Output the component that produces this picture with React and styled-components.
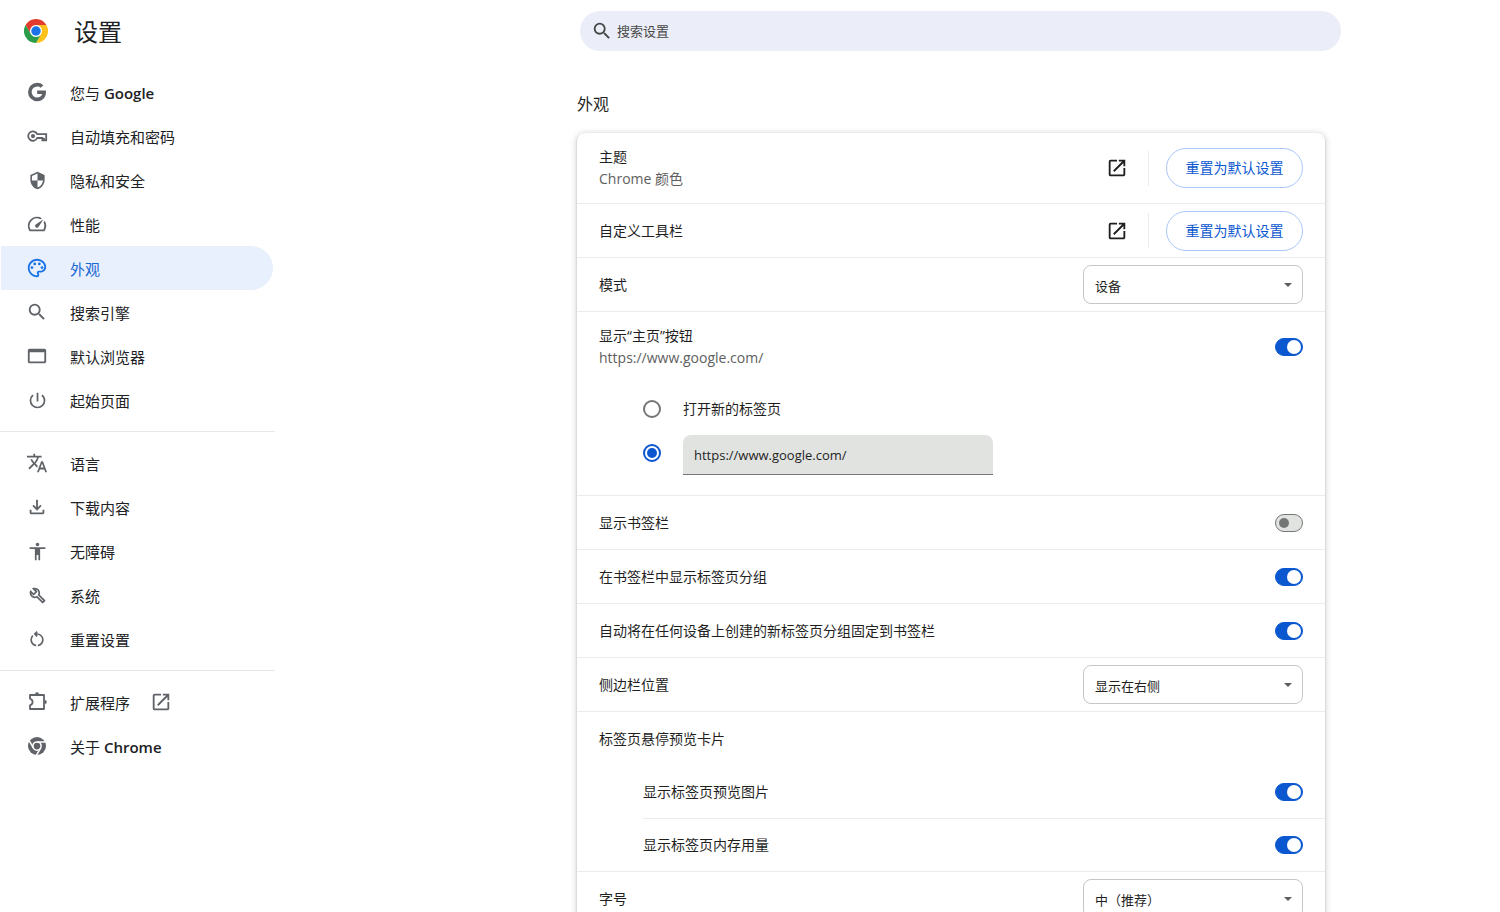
import React from 'react';
import styled, { createGlobalStyle } from 'styled-components';
import {
   MdSecurity,
   MdSpeed,
   MdOutlinePalette,
   MdSearch,
   MdPowerSettingsNew,
   MdTranslate,
   MdOutlineFileDownload,
   MdAccessibility,
   MdOutlineRestartAlt,
   MdOpenInNew,
} from 'react-icons/md';

const GlobalStyle = createGlobalStyle`
   * {
      box-sizing: border-box;
   }

   body {
      margin: 0;
      background: #fff;
      color: #1f1f1f;
      font-family: "Open Sans", "Noto Sans CJK SC", sans-serif;
      font-size: 14px;
      line-height: 22px;
   }

   button, input, select {
      font-family: inherit;
   }
`;

const Page = styled.div`
   height: 100vh;
   display: flex;
   flex-direction: column;
`;

const Header = styled.header`
   flex: none;
   height: 62px;
   display: flex;
   align-items: center;
`;

const Brand = styled.div`
   flex: none;
   width: 275px;
   padding-left: 24px;
   display: flex;
   align-items: center;
   gap: 26px;
`;

const Title = styled.h1`
   margin: 0;
   padding-top: 2px;
   font-size: 24px;
   font-weight: 400;
   line-height: 32px;
   color: #202124;
`;

const SearchArea = styled.div`
   flex: 1;
   display: grid;
   grid-template-columns: 305fr minmax(0, 761px) 159fr;
`;

const SearchBox = styled.label`
   grid-column: 2;
   height: 40px;
   padding: 0 12px 0 11px;
   display: flex;
   align-items: center;
   gap: 4px;
   border-radius: 20px;
   background: #ebeef8;
   color: #474747;
`;

const SearchInput = styled.input`
   flex: 1;
   min-width: 0;
   padding: 0;
   border: 0;
   outline: 0;
   background: transparent;
   font-size: 13px;
   color: #1f1f1f;

   &::placeholder {
      color: #474747;
      opacity: 1;
   }
`;

const Body = styled.div`
   flex: 1;
   min-height: 0;
   display: flex;
`;

const Sidebar = styled.nav`
   flex: none;
   width: 275px;
   padding-top: 8px;
   overflow-y: auto;
   scrollbar-width: none;
`;

const NavGroup = styled.ul`
   margin: 0;
   padding: 0 2px 0 1px;
   list-style: none;
`;

const NavDivider = styled.hr`
   height: 1px;
   margin: 9px 0;
   border: 0;
   background: #e8e8e8;
`;

const NavLink = styled.a`
   height: 44px;
   padding-left: 25px;
   display: flex;
   align-items: center;
   border-radius: 0 22px 22px 0;
   background: ${({ $active }) => ($active ? '#e8f0fe' : 'transparent')};
   color: ${({ $active }) => ($active ? '#1967d2' : '#202124')};
   font-size: 15px;
   text-decoration: none;
`;

const NavIcon = styled.span`
   flex: none;
   width: 22px;
   height: 22px;
   margin-right: 22px;
   display: flex;
   align-items: center;
   justify-content: center;
   color: ${({ $active }) => ($active ? '#1a73e8' : '#5f6368')};
`;

const NavText = styled.span`
   padding-top: 1px;
`;

const Latin = styled.span`
   font-weight: 600;
`;

const NavExternal = styled(MdOpenInNew)`
   margin-left: 20px;
   color: #5f6368;
`;

const Main = styled.main`
   flex: 1;
   min-width: 0;
   overflow-y: auto;
   scrollbar-width: none;
   display: grid;
   grid-template-columns: 302fr minmax(0, 748px) 175fr;
`;

const Section = styled.section`
   grid-column: 2;
   padding: 31px 0 40px;
`;

const SectionTitle = styled.h2`
   margin: 0 0 18px;
   font-size: 16px;
   font-weight: 400;
   line-height: 22px;
   color: #1f1f1f;
`;

const Card = styled.div`
   border-radius: 8px;
   background: #fff;
   box-shadow: 0 1px 2px rgba(60, 64, 67, 0.3), 0 1px 6px 1px rgba(60, 64, 67, 0.2);
`;

const Row = styled.div`
   min-height: ${({ $tall }) => ($tall ? 71 : 54)}px;
   padding: 0 22px;
   display: flex;
   align-items: center;
   justify-content: space-between;
   border-top: 1px solid #ebebeb;

   &:first-child {
      min-height: 70px;
      border-top: 0;
   }
`;

const Nested = styled.div`
   margin-left: 66px;
`;

const NestedRow = styled(Row)`
   min-height: 53px;
   padding-left: 0;

   &:first-child {
      min-height: 53px;
   }
`;

const Text = styled.div`
   display: flex;
   flex-direction: column;
`;

const SubLabel = styled.span`
   color: #5e5e5e;
`;

const Actions = styled.div`
   display: flex;
   align-items: center;
`;

const IconButton = styled.button`
   width: 36px;
   height: 36px;
   padding: 0;
   display: flex;
   align-items: center;
   justify-content: center;
   border: 0;
   border-radius: 50%;
   background: transparent;
   color: #1f1f1f;
`;

const Separator = styled.span`
   width: 1px;
   height: 35px;
   margin: 0 17px 0 13px;
   background: #ebebeb;
`;

const ResetButton = styled.button`
   min-width: 137px;
   height: 40px;
   padding: 0 16px;
   border: 1px solid #a8c7fa;
   border-radius: 20px;
   background: #fff;
   color: #0b57d0;
   font-size: 14px;
   line-height: 22px;
`;

const SelectBox = styled.div`
   flex: none;
   width: 220px;
   display: grid;
   align-items: center;

   & > * {
      grid-area: 1 / 1;
   }
`;

const SelectField = styled.select`
   width: 100%;
   height: 39px;
   padding: 2px 32px 0 11px;
   appearance: none;
   border: 1px solid #c4c7c5;
   border-radius: 8px;
   background: #fff;
   color: #1f1f1f;
   font-size: 13px;
`;

const SelectArrow = styled.svg`
   justify-self: end;
   margin-right: 11px;
   pointer-events: none;
`;

const Switch = styled.input.attrs({ type: 'checkbox', role: 'switch' })`
   flex: none;
   width: 28px;
   height: 18px;
   margin: 0;
   padding: 0 3px;
   display: flex;
   align-items: center;
   appearance: none;
   border: 1px solid #747775;
   border-radius: 9px;
   background: #e1e3e1;

   &::before {
      content: '';
      width: 10px;
      height: 10px;
      border-radius: 50%;
      background: #747775;
   }

   &:checked {
      padding: 0 1px;
      justify-content: flex-end;
      border-color: #0b57d0;
      background: #0b57d0;
   }

   &:checked::before {
      width: 14px;
      height: 14px;
      background: #fff;
   }
`;

const HomeOptions = styled.div`
   padding: 5px 22px 20px 66px;
`;

const HomeOption = styled.div`
   height: 44px;
   display: flex;
   align-items: center;
   gap: 22px;
`;

const Radio = styled.input.attrs({ type: 'radio' })`
   flex: none;
   width: 18px;
   height: 18px;
   margin: 0;
   display: grid;
   place-items: center;
   appearance: none;
   border: 2px solid #747775;
   border-radius: 50%;

   &:checked {
      border-color: #0b57d0;
   }

   &:checked::before {
      content: '';
      width: 10px;
      height: 10px;
      border-radius: 50%;
      background: #0b57d0;
   }
`;

const UrlInput = styled.input`
   width: 310px;
   height: 40px;
   padding: 0 11px;
   align-self: flex-end;
   border: 0;
   border-bottom: 1px solid #747775;
   border-radius: 8px 8px 0 0;
   outline: 0;
   background: #e1e3e1;
   color: #1f1f1f;
   font-size: 13px;
`;

const ChromeLogo = () =>
   <svg width="24" height="24" viewBox="0 0 48 48" aria-hidden="true">
      <circle cx="24" cy="24" r="12" fill="#fff" />
      <path fill="#e33b2e" d="M24 12H44.78a23.99 23.99 0 0 0-41.56 0L13.61 30A11.99 11.99 0 0 1 24 12Z" />
      <path fill="#fcc21b" d="M34.39 30 24 48A23.99 23.99 0 0 0 44.78 12H24A11.99 11.99 0 0 1 34.39 30Z" />
      <path fill="#2a9c4a" d="M13.61 30 3.22 12A23.99 23.99 0 0 0 24 48L34.39 30a11.99 11.99 0 0 1-20.78 0Z" />
      <circle cx="24" cy="24" r="9.5" fill="#1a73e8" />
   </svg>

const ChromeIcon = () =>
   <svg width="18" height="18" viewBox="0 0 48 48" aria-hidden="true">
      <circle cx="24" cy="24" r="24" fill="currentColor" />
      <g fill="none" stroke="#fff" strokeWidth="4">
         <circle cx="24" cy="24" r="11" />
         <path d="M24 13H46M33.5 29.5 22.5 48.5M14.5 29.5 3.5 10.5" />
      </g>
   </svg>

const GoogleIcon = () =>
   <svg width="22" height="22" viewBox="0 0 24 24" fill="currentColor" aria-hidden="true">
      <path d="M12.2 10.24v3.82h5.45c-.72 2.32-2.65 3.97-5.45 3.97a6.03 6.03 0 1 1 0-12.06c1.5 0 2.87.55 3.92 1.45l2.82-2.81A9.97 9.97 0 0 0 12.2 2a10 10 0 1 0 0 20c8.4 0 10.25-7.85 9.43-11.75z" />
   </svg>

const KeyIcon = () =>
   <svg width="22" height="22" viewBox="0 0 22 22" fill="none" stroke="currentColor" strokeWidth="1.8" aria-hidden="true">
      <path d="M11.2 9.2H20.2V15.4H16.4V13H11.2A4.7 4.7 0 1 1 11.2 9.2Z" />
      <path d="M18 13V15.4" />
      <circle cx="7" cy="11.1" r="2.1" fill="currentColor" stroke="none" />
   </svg>

const WindowIcon = () =>
   <svg width="22" height="22" viewBox="0 0 24 24" fill="currentColor" aria-hidden="true">
      <path d="M20 4H4c-1.11 0-2 .9-2 2v12c0 1.1.89 2 2 2h16c1.1 0 2-.9 2-2V6c0-1.1-.9-2-2-2zm0 14H4V8h16v10z" />
   </svg>

const WrenchIcon = () =>
   <svg width="21" height="21" viewBox="0 -960 960 960" fill="currentColor" aria-hidden="true">
      <path d="M686-132 444-376q-20 8-40.5 12t-43.5 4q-100 0-170-70t-70-170q0-36 10-68.5t28-61.5l146 146 72-72-146-146q29-18 61.5-28t68.5-10q100 0 170 70t70 170q0 23-4 43.5T584-516l244 242q12 12 12 29t-12 29l-84 84q-12 12-29 12t-29-12Zm29-85 27-27-256-256q18-20 26-46.5t8-53.5q0-60-38.5-104.5T386-758l74 74q12 12 12 28t-12 28L332-500q-12 12-28 12t-28-12l-74-74q9 57 53.5 95.5T360-440q26 0 53-8t47-26l255 257Z" />
   </svg>

const PuzzleIcon = () =>
   <svg width="22" height="22" viewBox="0 0 22 22" fill="none" stroke="currentColor" strokeWidth="1.8" aria-hidden="true">
      <path d="M4 4H18V18H4V14.4Q6.6 13.4 6.6 11T4 7.6Z" strokeLinejoin="round" />
      <path d="M9 3.2A2 2 0 0 1 13 3.2ZM18.8 9A2 2 0 0 1 18.8 13Z" fill="currentColor" stroke="none" />
   </svg>

const NAV = [
   [
      { label: '您与 ', latin: 'Google', icon: <GoogleIcon /> },
      { label: '自动填充和密码', icon: <KeyIcon /> },
      { label: '隐私和安全', icon: <MdSecurity size={19} /> },
      { label: '性能', icon: <MdSpeed size={22} /> },
      { label: '外观', icon: <MdOutlinePalette size={22} />, active: true },
      { label: '搜索引擎', icon: <MdSearch size={22} /> },
      { label: '默认浏览器', icon: <WindowIcon /> },
      { label: '起始页面', icon: <MdPowerSettingsNew size={21} /> },
   ],
   [
      { label: '语言', icon: <MdTranslate size={22} /> },
      { label: '下载内容', icon: <MdOutlineFileDownload size={22} /> },
      { label: '无障碍', icon: <MdAccessibility size={21} /> },
      { label: '系统', icon: <WrenchIcon /> },
      { label: '重置设置', icon: <MdOutlineRestartAlt size={20} /> },
   ],
   [
      { label: '扩展程序', icon: <PuzzleIcon />, external: true },
      { label: '关于 ', latin: 'Chrome', icon: <ChromeIcon /> },
   ],
];

const SwitchRow = ({ as: Wrapper = Row, id, label, on }) =>
   <Wrapper>
      <label htmlFor={id}>{label}</label>
      <Switch id={id} defaultChecked={on} />
   </Wrapper>

const SelectRow = ({ id, label, options }) =>
   <Row>
      <label htmlFor={id}>{label}</label>
      <SelectBox>
         <SelectField id={id}>
            {options.map((option) => <option key={option}>{option}</option>)}
         </SelectField>
         <SelectArrow width="8" height="4" viewBox="0 0 8 4" aria-hidden="true">
            <path d="M0 0H8L4 4Z" fill="#5e5e5e" />
         </SelectArrow>
      </SelectBox>
   </Row>

const ResetActions = ({ name }) =>
   <Actions>
      <IconButton type="button" aria-label={name}>
         <MdOpenInNew size={22} />
      </IconButton>
      <Separator />
      <ResetButton type="button">重置为默认设置</ResetButton>
   </Actions>

const SideNav = () =>
   <Sidebar>
      {NAV.map((group, index) => (
         <React.Fragment key={index}>
            {index > 0 && <NavDivider />}
            <NavGroup>
               {group.map(({ label, latin, icon, active, external }) => (
                  <li key={label}>
                     <NavLink href="#" $active={active} aria-current={active ? 'page' : undefined}>
                        <NavIcon $active={active}>{icon}</NavIcon>
                        <NavText>{label}{latin && <Latin>{latin}</Latin>}</NavText>
                        {external && <NavExternal size={22} />}
                     </NavLink>
                  </li>
               ))}
            </NavGroup>
         </React.Fragment>
      ))}
   </Sidebar>

const Appearance = () =>
   <Section>
      <SectionTitle>外观</SectionTitle>
      <Card>
         <Row>
            <Text>
               <span>主题</span>
               <SubLabel>Chrome 颜色</SubLabel>
            </Text>
            <ResetActions name="主题" />
         </Row>
         <Row>
            <span>自定义工具栏</span>
            <ResetActions name="自定义工具栏" />
         </Row>
         <SelectRow id="mode" label="模式" options={['设备', '浅色', '深色']} />
         <Row $tall>
            <Text>
               <label htmlFor="home">显示“主页”按钮</label>
               <SubLabel>https://www.google.com/</SubLabel>
            </Text>
            <Switch id="home" defaultChecked />
         </Row>
         <HomeOptions>
            <HomeOption>
               <Radio id="home-newtab" name="home-page" />
               <label htmlFor="home-newtab">打开新的标签页</label>
            </HomeOption>
            <HomeOption>
               <Radio name="home-page" defaultChecked aria-label="自定义网址" />
               <UrlInput type="text" defaultValue="https://www.google.com/" aria-label="主页网址" />
            </HomeOption>
         </HomeOptions>
         <SwitchRow id="bookmarks" label="显示书签栏" />
         <SwitchRow id="groups" label="在书签栏中显示标签页分组" on />
         <SwitchRow id="pin" label="自动将在任何设备上创建的新标签页分组固定到书签栏" on />
         <SelectRow id="side" label="侧边栏位置" options={['显示在右侧', '显示在左侧']} />
         <Row>
            <span>标签页悬停预览卡片</span>
         </Row>
         <Nested>
            <SwitchRow as={NestedRow} id="preview" label="显示标签页预览图片" on />
            <SwitchRow as={NestedRow} id="memory" label="显示标签页内存用量" on />
         </Nested>
         <SelectRow id="font-size" label="字号" options={['中（推荐）', '大', '小']} />
      </Card>
   </Section>

const App = () =>
   <>
      <GlobalStyle />
      <Page>
         <Header>
            <Brand>
               <ChromeLogo />
               <Title>设置</Title>
            </Brand>
            <SearchArea>
               <SearchBox>
                  <MdSearch size={22} />
                  <SearchInput type="search" placeholder="搜索设置" aria-label="搜索设置" />
               </SearchBox>
            </SearchArea>
         </Header>
         <Body>
            <SideNav />
            <Main>
               <Appearance />
            </Main>
         </Body>
      </Page>
   </>



export default App;
